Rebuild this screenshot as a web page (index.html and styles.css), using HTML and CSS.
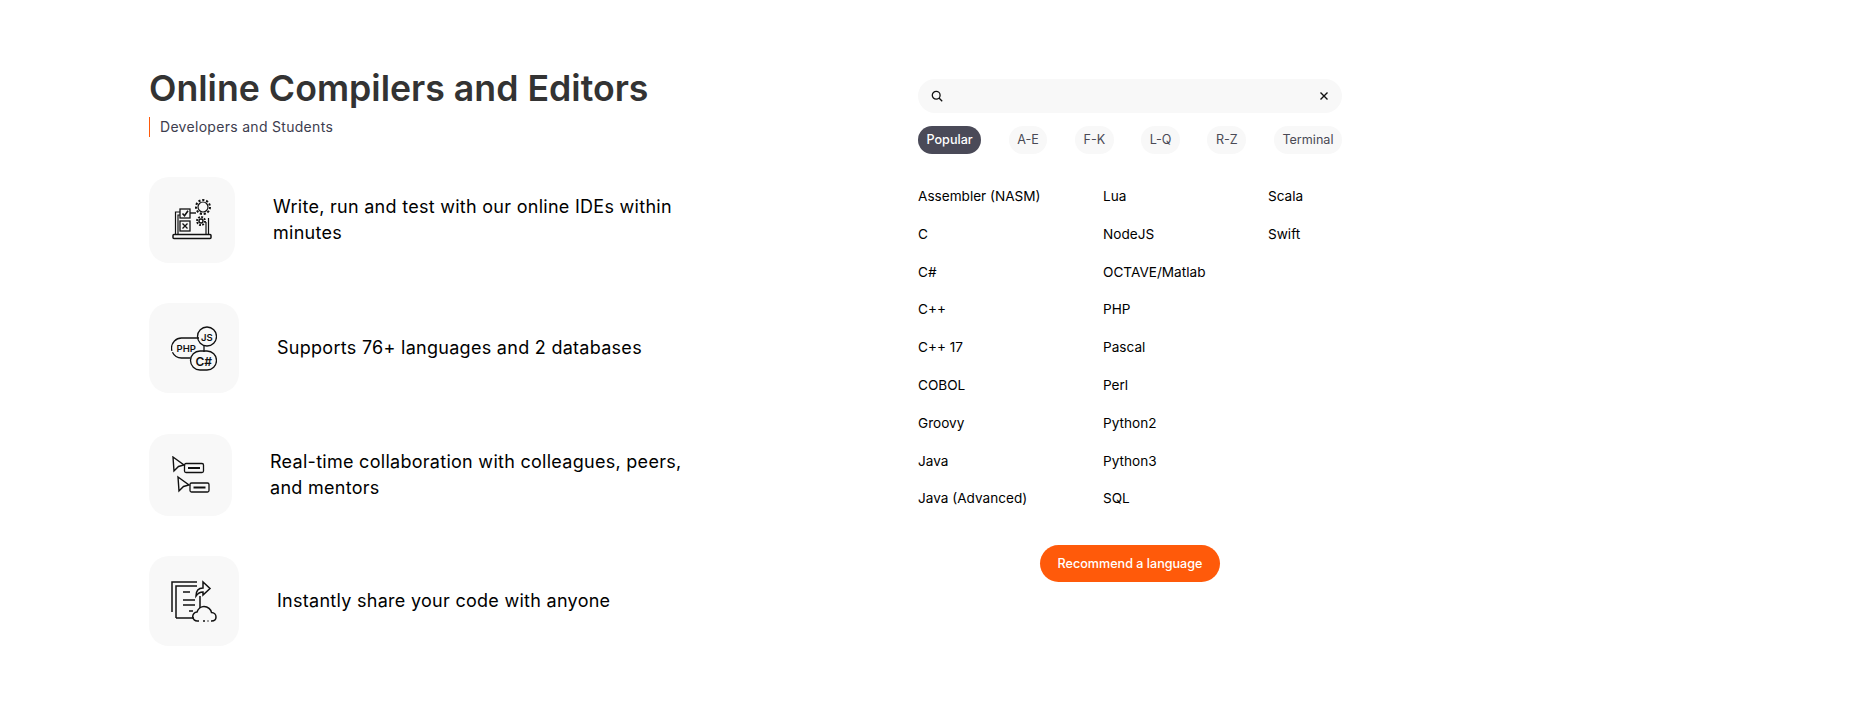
FILE: index.html
```html
<!DOCTYPE html>
<html lang="en">
<head>
    <meta charset="UTF-8">
    <title>Online Compilers and Editors</title>
    <link rel="stylesheet" href="styles.css">
</head>
<body>
    <div class="container">
        <div class="intro">
            <h1>Online Compilers and Editors</h1>
            <p class="subtitle">Developers and Students</p>

            <div class="feature feature-one">
                <div class="tile">
                    <svg width="40" height="44" viewBox="0 0 40 44" fill="none" stroke="#111" stroke-width="1.2">
                        <path d="M8 14H3.5v22M6 36V17h2M36.5 20v16M34 24v12" stroke-width="1.2"/>
                        <rect x="1" y="36.5" width="38" height="4" rx="1" stroke-width="1.5"/>
                        <rect x="8" y="11" width="10" height="9" stroke-width="1.3"/>
                        <path d="M10.5 15.5l2 2.2 3.5-5" stroke-width="1.6"/>
                        <rect x="8" y="23" width="10" height="10" stroke-width="1.3"/>
                        <path d="M10.5 25.5l5 5M15.5 25.5l-5 5" stroke-width="1.3"/>
                        <path d="M18 15h6" stroke-width="1.4"/>
                        <circle cx="31" cy="9" r="5"/>
                        <circle cx="31" cy="9" r="7" stroke-width="2" stroke-dasharray="2.2 1.8"/>
                        <circle cx="29" cy="23" r="2" stroke-width="1.4"/>
                        <circle cx="29" cy="23" r="4" stroke-width="2" stroke-dasharray="1.8 1.3"/>
                    </svg>
                </div>
                <p>Write, run and test with our online IDEs within minutes</p>
            </div>

            <div class="feature feature-two">
                <div class="tile">
                    <svg width="46" height="46" viewBox="0 0 46 46" fill="none" stroke="#111" stroke-width="1.3">
                        <path d="M28 13H10.5a10 10 0 0 0 0 20H19" stroke-dasharray="36 1.5"/>
                        <path d="M33 20v7"/>
                        <circle cx="36" cy="11.5" r="9.5"/>
                        <rect x="19.500" y="26" width="26" height="19" rx="9.5"/>
                        <text class="icon-text" x="5.5" y="27">PHP</text>
                        <text class="icon-text" x="30" y="15.5">JS</text>
                        <text class="icon-text icon-text-big" x="24.5" y="40.5">C#</text>
                    </svg>
                </div>
                <p>Supports 76+ languages and 2 databases</p>
            </div>

            <div class="feature feature-three">
                <div class="tile">
                    <svg width="38" height="38" viewBox="0 0 38 38" fill="none" stroke="#111" stroke-width="1.3">
                        <path d="M1 1l11 8-5.5 1.5L2 15z" stroke-width="1.4"/>
                        <rect x="12.5" y="7.5" width="19" height="9" rx="1.5"/>
                        <path d="M16 12h12" stroke-width="2"/>
                        <path d="M6 21l11 8-5.5 1.5L7 35z" stroke-width="1.4"/>
                        <rect x="18" y="27" width="19" height="9" rx="1.5"/>
                        <path d="M21.5 31.5h12" stroke-width="2"/>
                    </svg>
                </div>
                <p>Real-time collaboration with colleagues, peers, and mentors</p>
            </div>

            <div class="feature feature-four">
                <div class="tile">
                    <svg width="46" height="46" viewBox="0 0 46 46" fill="none" stroke="#111" stroke-width="1.5">
                        <path d="M1 34V4h25"/>
                        <path d="M5 34V8h21M29 18v12M5 40v-6M5 40h18"/>
                        <path d="M12 14h7M12 22h12M12 27h12M18 33h4"/>
                        <path d="M25 18c0-5 2-8 7-8V4l7 6.5-7 6.5v-3c-3 0-5 1-7 4z"/>
                        <path d="M28 43h-1.5a4.5 4.5 0 0 1-.5-9c1-3 4-5.5 7-5.5 4 0 7 3 7.5 6 2.5 0 4.5 2 4.5 4.5s-2 4-4.5 4H40M32 43h2M36.5 43h1"/>
                    </svg>
                </div>
                <p>Instantly share your code with anyone</p>
            </div>
        </div>

        <div class="picker">
            <div class="search">
                <svg width="12" height="12" viewBox="0 0 12 12" fill="none" stroke="#111" stroke-width="1.3"><circle cx="5.2" cy="5.2" r="3.9"/><path d="M8 8l3.2 3.2"/></svg>
                <svg width="10" height="10" viewBox="0 0 10 10" fill="none" stroke="#111" stroke-width="1.4"><path d="M1.5 1.5l7 7M8.5 1.5l-7 7"/></svg>
            </div>
            <div class="tabs">
                <span class="tab active">Popular</span>
                <span class="tab">A-E</span>
                <span class="tab">F-K</span>
                <span class="tab">L-Q</span>
                <span class="tab">R-Z</span>
                <span class="tab">Terminal</span>
            </div>
            <div class="languages">
                <ul class="col-one">
                    <li>Assembler (NASM)</li>
                    <li>C</li>
                    <li>C#</li>
                    <li>C++</li>
                    <li>C++ 17</li>
                    <li>COBOL</li>
                    <li>Groovy</li>
                    <li>Java</li>
                    <li>Java (Advanced)</li>
                </ul>
                <ul class="col-two">
                    <li>Lua</li>
                    <li>NodeJS</li>
                    <li>OCTAVE/Matlab</li>
                    <li>PHP</li>
                    <li>Pascal</li>
                    <li>Perl</li>
                    <li>Python2</li>
                    <li>Python3</li>
                    <li>SQL</li>
                </ul>
                <ul>
                    <li>Scala</li>
                    <li>Swift</li>
                </ul>
            </div>
            <button type="button">Recommend a language</button>
        </div>
    </div>
</body>
</html>
```

FILE: styles.css
```css
body {
    margin: 0;
    background: #fff;
    font-family: Inter, "Liberation Sans", sans-serif;
}
.container {
    display: flex;
    padding: 63px 0 0 149px;
}
.intro {
    width: 769px;
}
h1 {
    margin: 0;
    font-size: 35.7px;
    line-height: 50px;
    font-weight: 600;
    color: #333;
}
.subtitle {
    margin: 4px 0 0;
    padding-left: 10px;
    border-left: 1px solid #ff5a0a;
    font-size: 14px;
    line-height: 20px;
    letter-spacing: 0.3px;
    color: #3d3d4e;
}
.feature {
    display: flex;
    align-items: center;
}
.feature p {
    margin: 0;
    width: 420px;
    font-size: 18px;
    line-height: 26px;
    letter-spacing: 0.28px;
    color: #000;
}
.tile {
    display: flex;
    align-items: center;
    justify-content: center;
    flex: none;
    margin-right: 38px;
    background: #f8f8f8;
    border-radius: 20px;
}
.feature-one {
    margin-top: 40px;
}
.feature-one .tile {
    width: 86px;
    height: 86px;
}
.feature-two {
    margin-top: 40px;
}
.feature-two .tile, .feature-four .tile {
    width: 90px;
    height: 90px;
}
.feature-three {
    margin-top: 41px;
}
.feature-three .tile {
    width: 83px;
    height: 82px;
}
.feature-four {
    margin-top: 40px;
}
.icon-text {
    font-size: 9.5px;
    font-weight: 600;
    fill: #111;
    stroke: none;
}
.icon-text-big {
    font-size: 12px;
}
.picker {
    width: 424px;
    margin-top: 16px;
}
.search {
    display: flex;
    align-items: center;
    justify-content: space-between;
    height: 34px;
    padding: 0 13px;
    background: #f8f8f8;
    border-radius: 17px;
}
.tabs {
    display: flex;
    justify-content: space-between;
    margin-top: 13px;
}
.tab {
    height: 28px;
    padding: 0 8.5px;
    background: #f8f8f8;
    border-radius: 14px;
    font-size: 12.6px;
    line-height: 28px;
    color: #4a4a55;
}
.tab.active {
    background: #4a4a58;
    color: #fff;
    font-weight: 500;
}
.languages {
    display: flex;
    margin-top: 24px;
}
.languages ul {
    margin: 0;
    padding: 0;
    list-style: none;
}
.col-one {
    width: 185px;
}
.col-two {
    width: 165px;
}
.languages li {
    height: 37.8px;
    font-size: 13.6px;
    line-height: 37.8px;
    color: #000;
}
button {
    display: block;
    width: 180px;
    height: 37px;
    margin: 27px auto 0;
    padding: 0;
    border: none;
    border-radius: 19px;
    background: #ff5a0a;
    color: #fff;
    font-family: inherit;
    font-size: 12.6px;
    font-weight: 500;
}
```
